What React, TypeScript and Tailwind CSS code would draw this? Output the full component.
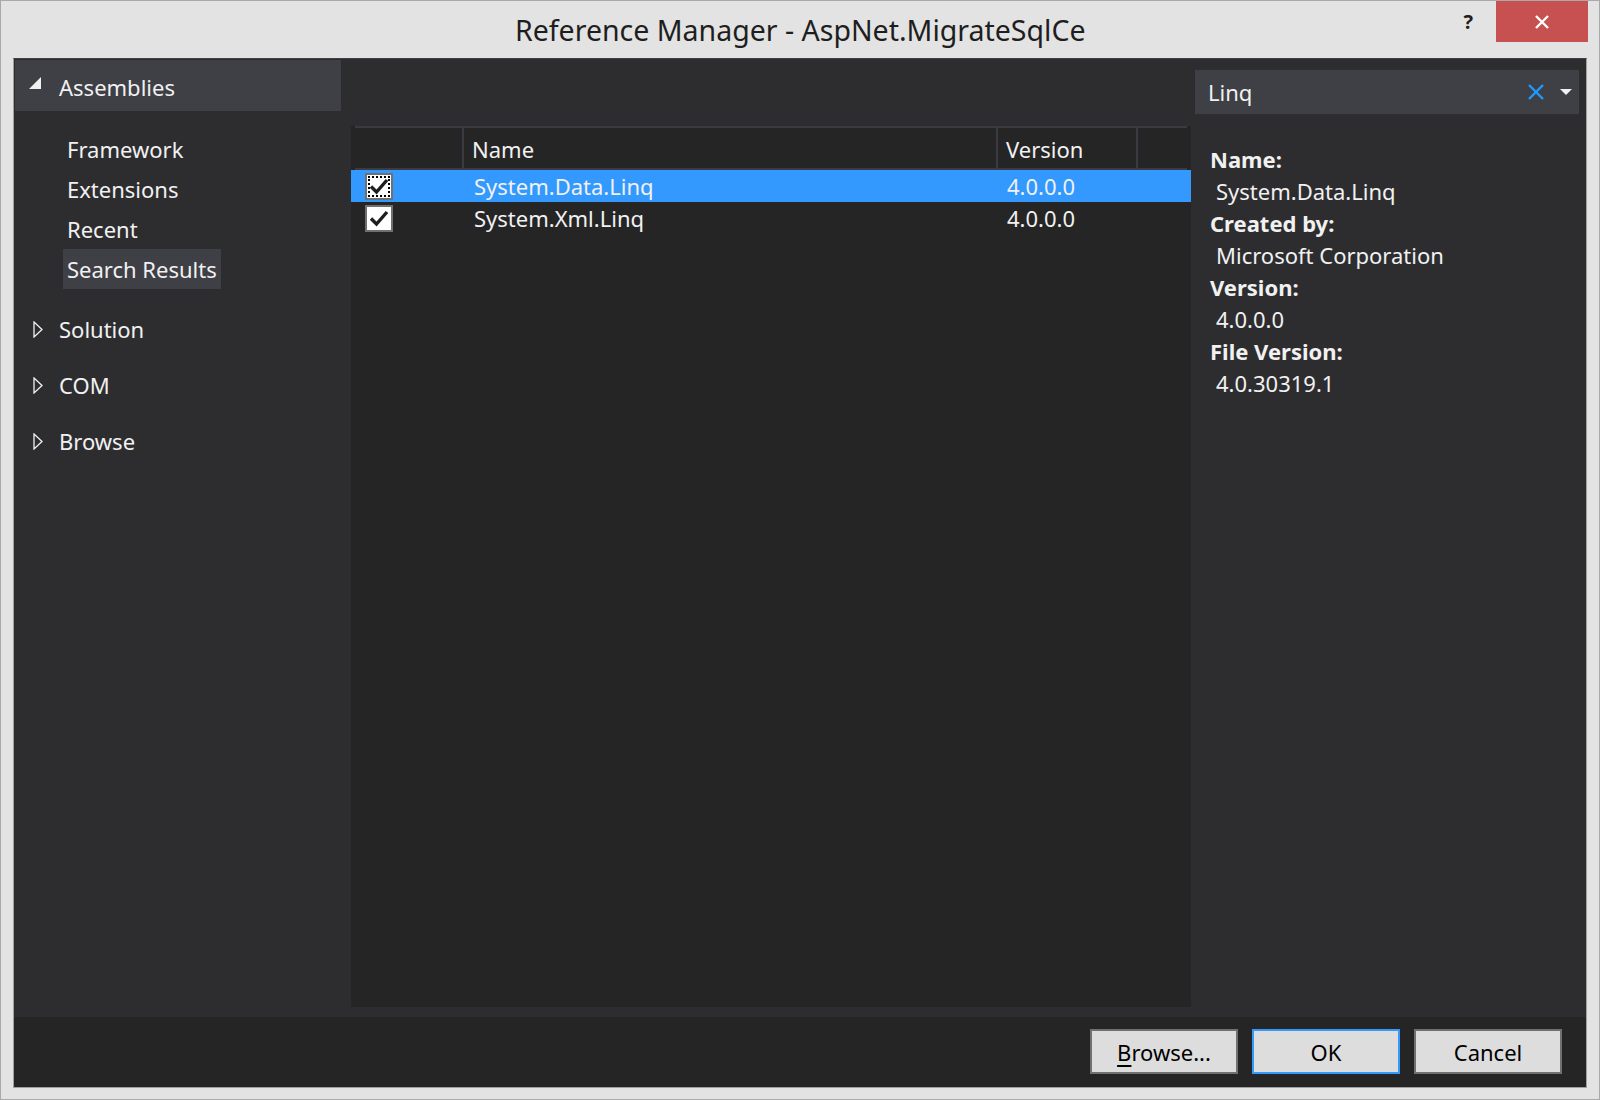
import React from 'react';

const tree = ['Framework', 'Extensions', 'Recent', 'Search Results'];
const others = ['Solution', 'COM', 'Browse'];

const rows = [
  { name: 'System.Data.Linq', version: '4.0.0.0', selected: true },
  { name: 'System.Xml.Linq', version: '4.0.0.0', selected: false },
];

const details = [
  { label: 'Name:', value: 'System.Data.Linq' },
  { label: 'Created by:', value: 'Microsoft Corporation' },
  { label: 'Version:', value: '4.0.0.0' },
  { label: 'File Version:', value: '4.0.30319.1' },
];

const CollapsedArrow = () => (
  <svg width="10" height="17" viewBox="0 0 10 17" className="shrink-0">
    <path d="M1 1 L9 8.5 L1 16 Z" fill="none" stroke="#f1f1f1" strokeWidth="1.3" />
  </svg>
);

const CheckBox = ({ focused }: { focused: boolean }) => (
  <div className="relative w-[28px] h-[27px] border-2 border-[#707070] bg-white flex items-center justify-center">
    {focused && <div className="absolute inset-[1px] border-2 border-dotted border-black" />}
    <svg width="20" height="18" viewBox="0 0 20 18" className="relative">
      <path d="M2 9.5 L7.5 15 L18 3" fill="none" stroke="#1e1e1e" strokeWidth="3.4" />
    </svg>
  </div>
);

const App = () => {
  return (
    <div className="w-[1600px] h-[1100px] bg-[#e3e3e3] border border-[#a9a9a9] flex flex-col font-['Segoe_UI','Noto_Sans',sans-serif] text-[#f1f1f1] overflow-hidden">
      {/* title bar */}
      <div className="h-[57px] flex items-start shrink-0">
        <div className="ml-[514px] mt-[9px] text-[28.5px] leading-[40px] text-[#1e1e1e]">
          Reference Manager - AspNet.MigrateSqlCe
        </div>
        <div className="ml-auto mt-[6px] mr-[23px] text-[20px] font-bold text-[#1e1e1e] leading-[30px]">?</div>
        <div className="w-[92px] h-[41px] bg-[#c75050] mr-[11px] flex items-center justify-center">
          <svg width="16" height="16" viewBox="0 0 16 16">
            <path d="M2 2 L14 14 M14 2 L2 14" stroke="white" strokeWidth="2.4" />
          </svg>
        </div>
      </div>

      {/* dialog body */}
      <div className="mx-[12px] h-[1030px] border border-[#a0a0a0] border-t-[#3f3f46] flex flex-col shrink-0">
        <div className="flex-1 bg-[#2d2d30] flex">
          {/* sidebar */}
          <div className="w-[337px] pt-[1px] shrink-0">
            <div className="w-[326px] h-[51px] ml-[1px] bg-[#3f3f46] flex items-center">
              <svg width="12" height="12" viewBox="0 0 12 12" className="ml-[14px] mt-[-6px]">
                <path d="M12 0 L12 12 L0 12 Z" fill="#f1f1f1" />
              </svg>
              <span className="ml-[18px] mt-[3px] text-[22px]">Assemblies</span>
            </div>
            <div className="mt-[18px] flex flex-col items-start">
              {tree.map((t) => (
                <div
                  key={t}
                  className={`ml-[49px] h-[40px] px-[4px] flex items-center text-[22px] ${
                    t === 'Search Results' ? 'bg-[#3f3f46]' : ''
                  }`}
                >
                  {t}
                </div>
              ))}
            </div>
            <div className="mt-[12px]">
              {others.map((o) => (
                <div key={o} className="h-[56px] flex items-center">
                  <div className="ml-[19px] w-[26px]">
                    <CollapsedArrow />
                  </div>
                  <span className="text-[22px]">{o}</span>
                </div>
              ))}
            </div>
          </div>

          {/* assemblies list */}
          <div className="w-[840px] mt-[67px] mb-[10px] bg-[#252526] shrink-0 flex flex-col">
            <div className="mx-[4px] h-[44px] border-t-2 border-b-2 border-[#3a3a40] flex text-[22px]">
              <div className="w-[109px] border-r-2 border-[#3a3a40]" />
              <div className="w-[534px] border-r-2 border-[#3a3a40] pl-[8px] pt-[2px] flex items-center">Name</div>
              <div className="w-[140px] border-r-2 border-[#3a3a40] pl-[8px] pt-[2px] flex items-center">Version</div>
            </div>
            {rows.map((r) => (
              <div
                key={r.name}
                className={`h-[32px] flex items-center text-[22px] ${r.selected ? 'bg-[#3399ff]' : ''}`}
              >
                <div className="w-[113px] pl-[14px]">
                  <CheckBox focused={r.selected} />
                </div>
                <div className="w-[534px] pl-[10px]">{r.name}</div>
                <div className="pl-[9px]">{r.version}</div>
              </div>
            ))}
          </div>

          {/* search + details */}
          <div className="w-[384px] ml-[4px] mt-[11px] shrink-0">
            <div className="h-[44px] bg-[#3f3f46] flex items-center">
              <span className="ml-[13px] text-[22px]">Linq</span>
              <svg width="16" height="16" viewBox="0 0 16 16" className="ml-auto mr-[16px]">
                <path d="M1 1 L15 15 M15 1 L1 15" stroke="#1e9bff" strokeWidth="2.4" />
              </svg>
              <svg width="12" height="7" viewBox="0 0 12 7" className="mr-[7px]">
                <path d="M0 0 L12 0 L6 6 Z" fill="#f1f1f1" />
              </svg>
            </div>
            <div className="mt-[29px] pl-[15px] text-[22px]">
              {details.map((d) => (
                <div key={d.label}>
                  <div className="h-[32px] leading-[32px] font-bold">{d.label}</div>
                  <div className="h-[32px] leading-[32px] pl-[6px]">{d.value}</div>
                </div>
              ))}
            </div>
          </div>
        </div>

        {/* footer buttons */}
        <div className="h-[70px] bg-[#252526] shrink-0 flex items-start justify-end pt-[12px] pr-[24px] gap-[14px] text-[22px] text-black">
          <button className="w-[148px] h-[45px] pt-[2px] bg-[#dddddd] border-2 border-[#707070]">
            <span className="underline underline-offset-[4px]">B</span>rowse...
          </button>
          <button className="w-[148px] h-[45px] pt-[2px] bg-[#dddddd] border-2 border-[#3399ff]">OK</button>
          <button className="w-[148px] h-[45px] pt-[2px] bg-[#dddddd] border-2 border-[#707070]">Cancel</button>
        </div>
      </div>
    </div>
  );
};

export default App;
